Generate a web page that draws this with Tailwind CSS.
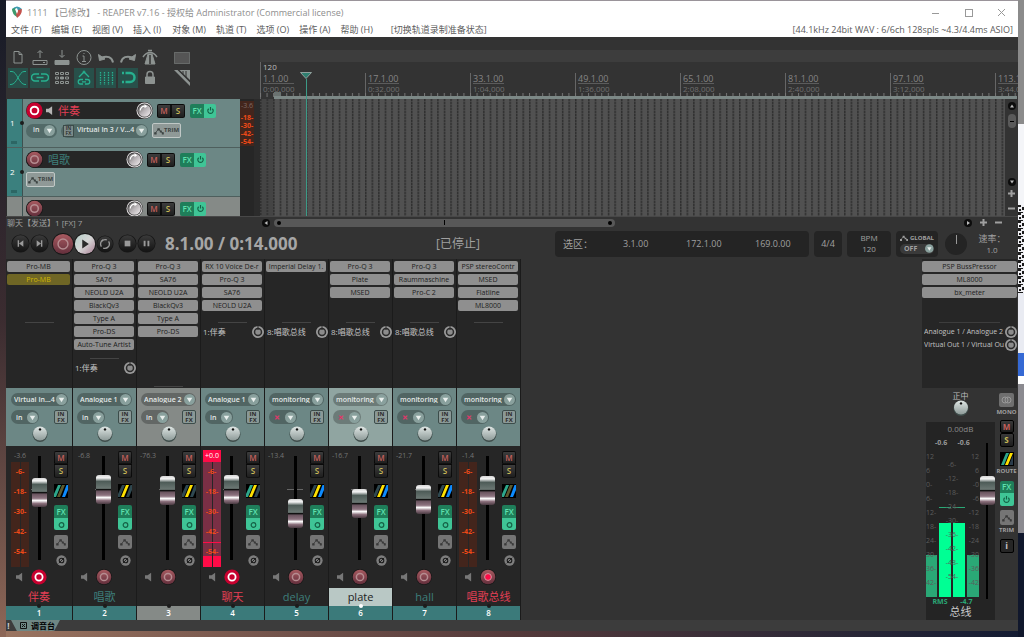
<!DOCTYPE html>
<html lang="zh-CN">
<head>
    <meta charset="UTF-8">
    <meta name="viewport" content="width=device-width, initial-scale=1.0">
    <title>1111 [已修改] - REAPER v7.16</title>
    <script src="https://cdn.jsdelivr.net/npm/@tailwindcss/browser@4"></script>
</head>
<body class="h-screen overflow-hidden flex bg-linear-to-b from-[#171b27] via-[#3b2c30] to-[#8d6757] font-['Open_Sans','Noto_Sans_CJK_SC',sans-serif] text-[#a0a0a0] select-none">

    <!-- Icon sprite -->
    <svg class="absolute w-0 h-0" aria-hidden="true" xmlns="http://www.w3.org/2000/svg">
        <defs>
            <linearGradient id="g-knob" x1="0" y1="0" x2="0" y2="1"><stop offset="0" stop-color="#dfe6e4"/><stop offset="1" stop-color="#8d9a98"/></linearGradient>
            <linearGradient id="g-vol" x1="0" y1="0" x2="1" y2="1"><stop offset="0" stop-color="#5a5a5a"/><stop offset="0.5" stop-color="#b9b4b7"/><stop offset="1" stop-color="#f4f0f2"/></linearGradient>
            <linearGradient id="g-rec" x1="0" y1="0" x2="0" y2="1"><stop offset="0" stop-color="#a85a60"/><stop offset="1" stop-color="#632f3c"/></linearGradient>
            <linearGradient id="g-play" x1="0" y1="0" x2="1" y2="1"><stop offset="0" stop-color="#b5cfc8"/><stop offset="0.5" stop-color="#d5d5d5"/><stop offset="1" stop-color="#a97f94"/></linearGradient>
            <linearGradient id="g-btn" x1="0" y1="0" x2="0" y2="1"><stop offset="0" stop-color="#3a3a3a"/><stop offset="1" stop-color="#141414"/></linearGradient>
            <pattern id="grid" width="6.5625" height="3" patternUnits="userSpaceOnUse"><rect x="0" width="1.5" height="2" fill="#303030"/><rect x="0" y="2" width="1.5" height="1" fill="#424242"/></pattern>
            <pattern id="ticks" width="6.5625" height="8" patternUnits="userSpaceOnUse"><rect width="1" height="8" fill="#767676"/></pattern>
            <pattern id="qr" width="6" height="8" patternUnits="userSpaceOnUse"><rect width="6" height="8" fill="#f0f0f4"/><path d="M0 0h3v2H0zM4 2h2v3H4zM1 4h2v2H1zM0 7h5v1H0z" fill="#1c1c1c"/></pattern>
        </defs>
        <symbol id="i-logo" viewBox="0 0 12 12"><path d="M1 3Q6-2 11 3L8 5 6 4Z" fill="#3c9bb0"/><path d="M1 3 4 2l3 5-1 4Q1 8 1 3Z" fill="#3d9a6c"/><path d="M11 3Q11 9 6 12L5 8l2-4Z" fill="#c3524c"/><path d="m4 3 2-1 1 3-1 3Z" fill="#fff"/></symbol>
        <symbol id="i-arrow" viewBox="0 0 12 12"><circle cx="6" cy="6" r="6" fill="#89a09d"/><path d="M3 4.200h6L6 9Z" fill="#e8eeec"/></symbol>
        <symbol id="i-speaker" viewBox="0 0 8 10"><path d="M0 3h3l4-3v10L3 7H0Z" fill="currentColor"/></symbol>
        <symbol id="i-rec" viewBox="0 0 16 16"><circle cx="8" cy="8" r="8" fill="#171717"/><circle cx="8" cy="8" r="7.300" fill="url(#g-rec)"/><circle cx="8" cy="8" r="3.600" fill="none" stroke="#b58c90" stroke-width="1.500"/></symbol>
        <symbol id="i-armed" viewBox="0 0 16 16"><circle cx="8" cy="8" r="7.600" fill="#c8002f"/><circle cx="8" cy="8" r="3.600" fill="none" stroke="#fff" stroke-width="1.800"/></symbol>
        <symbol id="i-auto" viewBox="0 0 16 16"><circle cx="8" cy="8" r="8" fill="#171717"/><circle cx="8" cy="8" r="7.300" fill="url(#g-rec)"/><circle cx="8" cy="8" r="3.400" fill="#ff0b47" stroke="#d39a9f"/></symbol>
        <symbol id="i-pan" viewBox="0 0 16 16"><circle cx="8" cy="8.500" r="7.500" fill="#3f4d4b"/><circle cx="8" cy="7.500" r="7" fill="url(#g-knob)"/><circle cx="8" cy="3.400" r="1.200" fill="#111"/></symbol>
        <symbol id="i-vol" viewBox="0 0 18 18"><circle cx="9" cy="9" r="8.500" fill="#e4e0e2"/><circle cx="9" cy="9" r="7.500" fill="#333"/><circle cx="9" cy="9" r="6.700" fill="url(#g-vol)"/><path d="M4.500 9a4.500 4.500 0 0 1 5-4.500" fill="none" stroke="#fff" stroke-width="1.300"/><path d="m9 2.500 3 2-3 2Z" fill="#fff"/></symbol>
        <symbol id="i-env" viewBox="0 0 12 10"><path d="M1 8 5.500 2.500 8 5.500l3 2" fill="none" stroke="currentColor" stroke-width="1"/><path d="M0 6.500h3v3H0zM4 1.500h3v3H4zM7 4.500h2.500V7H7zM9.500 6.500H12v3H9.500z" fill="currentColor"/></symbol>
        <symbol id="i-power" viewBox="0 0 10 10"><path d="M3 3a3 3 0 1 0 4 0M5 1v4" fill="none" stroke="currentColor" stroke-width="1.300"/></symbol>
        <symbol id="i-on" viewBox="0 0 10 10"><circle cx="5" cy="5.500" r="2.600" fill="none" stroke="currentColor" stroke-width="1.300"/></symbol>
        <symbol id="i-phase" viewBox="0 0 12 12"><circle cx="6" cy="6" r="5.600" fill="#7e7e7e"/><circle cx="6" cy="6" r="2.500" fill="none" stroke="#1c1c1c" stroke-width="1.200"/><path d="m3 9 6-6" stroke="#1c1c1c"/></symbol>
        <symbol id="i-send" viewBox="0 0 12 12"><circle cx="6" cy="6" r="6" fill="#9a9a9a"/><circle cx="6" cy="6" r="3.500" fill="#8c8c8c" stroke="#2b2b2b" stroke-width="1.500"/><path d="M6 0v4" stroke="#2b2b2b"/></symbol>
    </svg>

    <!-- Desktop edge, left -->
    <div class="w-[6px] shrink-0"></div>

    <div class="flex-1 min-w-0 flex flex-col pt-px bg-[#9a949a]">

        <!-- Title bar -->
        <header class="h-[22px] shrink-0 bg-white flex items-center pl-[5px] text-[9px] leading-none text-[#8e8e8e]">
            <svg class="w-3 h-3 mr-1"><use href="#i-logo"/></svg>
            <h1>1111 【已修改】 - REAPER v7.16 - 授权给 Administrator (Commercial license)</h1>
            <div class="ml-auto flex items-center pr-3 gap-6">
                <button aria-label="Minimize"><svg class="w-[9px] h-[9px]" viewBox="0 0 9 9"><path d="M1 5.500h7" stroke="#999"/></svg></button>
                <button aria-label="Maximize"><svg class="w-[9px] h-[9px]" viewBox="0 0 9 9"><rect x="1.500" y="1.500" width="7" height="7" fill="none" stroke="#999"/></svg></button>
                <button aria-label="Close"><svg class="w-[9px] h-[9px]" viewBox="0 0 9 9"><path d="m1 1 7 7M8 1 1 8" stroke="#999"/></svg></button>
            </div>
        </header>

        <!-- Menu -->
        <nav class="h-[14px] shrink-0 bg-white flex items-center pl-[5px] pr-[5px] gap-[10px] text-[9px] leading-[14px] text-[#5c5c5c] whitespace-nowrap">
            <a href="#">文件 (F)</a>
            <a href="#">编辑 (E)</a>
            <a href="#">视图 (V)</a>
            <a href="#">插入 (I)</a>
            <a href="#" class="ml-px">对象 (M)</a>
            <a href="#">轨道 (T)</a>
            <a href="#">选项 (O)</a>
            <a href="#">操作 (A)</a>
            <a href="#">帮助 (H)</a>
            <a href="#" class="ml-2">[切换轨道录制准备状态]</a>
            <span class="ml-auto">[44.1kHz 24bit WAV : 6/6ch 128spls ~4.3/4.4ms ASIO]</span>
        </nav>

        <!-- Track panel and arrange view -->
        <section class="h-[179px] shrink-0 flex bg-[#333]">
            <div class="w-[254px] shrink-0 flex flex-col">
                <div class="h-[62px] shrink-0 pt-[10px] pl-px flex gap-[10px]">
                    <div class="grid grid-cols-7 content-start" id="toolbar"></div>
                    <div class="flex flex-col">
                        <button aria-label="Marquee" class="w-[22px] h-[21px] grid place-items-center"><svg class="w-4 h-3" viewBox="0 0 16 12"><rect x=".5" y=".5" width="15" height="11" fill="#555" stroke="#8d9391" stroke-dasharray="1 1"/></svg></button>
                        <button aria-label="Hide grid" class="w-[22px] h-[20px] grid place-items-center"><svg class="w-4 h-4" viewBox="0 0 16 16"><path d="M0 0 16 16v-3.500L3.500 0ZM5.500 0H16v10Z" fill="#8d9391"/><path d="M9 1v3M12 1v6" stroke="#333"/></svg></button>
                    </div>
                </div>
                <div class="flex-1 flex min-h-0 pr-[6px] bg-[#2b2b2b]">
                    <div id="tracks" class="flex-1 min-h-0 overflow-hidden ml-px"></div>
                    <div class="w-[14px] bg-[#262626] pt-[2px]">
                        <div class="bg-[#43251c] text-[7px] leading-[8px] font-bold text-[#ef4a18] text-center flex flex-col">
                            <span class="h-[13px] text-[#7d6a64] leading-[10px] font-normal">-3.6</span>
                            <span>-18-</span><span>-30-</span><span>-42-</span><span>-54-</span>
                        </div>
                    </div>
                </div>
            </div>

            <div class="flex-1 min-w-0 flex flex-col relative overflow-hidden">
                <div class="h-[13px] shrink-0"></div>
                <div class="h-[12px] shrink-0 bg-[#3d3d3d]"></div>
                <div class="h-[11px] shrink-0 border-l border-[#666] pl-0.5 text-[8px] leading-[10px] text-[#bbb]">120</div>
                <div id="ruler" class="h-[26px] shrink-0 flex relative overflow-hidden"></div>
                <div class="flex-1 flex min-h-0">
                    <div class="flex-1 bg-[#515151]">
                        <svg class="w-full h-full block"><rect width="14" height="100%" fill="#444"/><rect width="100%" height="100%" fill="url(#grid)"/></svg>
                    </div>
                    <div class="w-[13px] flex flex-col items-center text-[#a0a0a0]">
                        <button aria-label="Scroll up" class="mt-[3px]"><svg class="w-2 h-2 block" viewBox="0 0 8 8"><circle cx="4" cy="4" r="4" fill="#0c0c0c"/><path d="M2 5.500h4l-2-3Z" fill="#bbb"/></svg></button>
                        <div class="mt-1 w-2 h-[14px] rounded-full bg-[#5a5a5a] grid place-items-center"><span class="w-1 h-px bg-black"></span></div>
                        <button aria-label="Scroll down" class="mt-auto"><svg class="w-2 h-2 block" viewBox="0 0 8 8"><circle cx="4" cy="4" r="4" fill="#0c0c0c"/><path d="M2 2.500h4l-2 3Z" fill="#bbb"/></svg></button>
                        <button aria-label="Zoom in" class="mt-1"><svg class="w-[7px] h-[7px] block" viewBox="0 0 7 7"><path d="M0 3.500h7M3.500 0v7" stroke="#a0a0a0" stroke-width="2"/></svg></button>
                        <button aria-label="Zoom out" class="mt-2 mb-1"><svg class="w-[7px] h-[7px] block" viewBox="0 0 7 7"><path d="M0 3.500h7" stroke="#a0a0a0" stroke-width="2"/></svg></button>
                    </div>
                </div>
                <!-- Edit cursor -->
                <div class="absolute left-[40px] top-[35px] bottom-0 w-[12px] flex flex-col items-center">
                    <svg class="w-3 h-[7px] shrink-0" viewBox="0 0 12 7"><path d="M.5.5h11L6 6.500Z" fill="#2f7f70" stroke="#8fa09c"/></svg>
                    <div class="w-px flex-1 bg-[#3c9a87]"></div>
                </div>
            </div>
        </section>

        <!-- Status and horizontal scroll -->
        <div class="h-[12px] shrink-0 bg-[#333] flex items-center border-t border-[#484848]">
            <span class="w-[256px] pl-px text-[8px] leading-none">聊天【发送】1 [FX] 7</span>
            <svg class="w-2 h-2" viewBox="0 0 8 8"><circle cx="4" cy="4" r="4" fill="#0c0c0c"/><path d="M5.500 2v4l-3-2Z" fill="#bbb"/></svg>
            <div class="ml-1 w-[341px] h-2 rounded-full bg-[#585858] flex items-center justify-between px-[3px]">
                <span class="w-1 h-1 rounded-full bg-black"></span><span class="w-px h-[5px] bg-black"></span><span class="w-1 h-1 rounded-full bg-black"></span>
            </div>
            <div class="ml-auto flex items-center gap-2 pr-[16px]">
                <svg class="w-2 h-2" viewBox="0 0 8 8"><circle cx="4" cy="4" r="4" fill="#0c0c0c"/><path d="M3 2v4l3-2Z" fill="#bbb"/></svg>
                <svg class="w-[7px] h-[7px]" viewBox="0 0 7 7"><path d="M0 3.500h7M3.500 0v7" stroke="#a0a0a0" stroke-width="2"/></svg>
                <svg class="w-[7px] h-[7px]" viewBox="0 0 7 7"><path d="M0 3.500h7" stroke="#a0a0a0" stroke-width="2"/></svg>
            </div>
        </div>

        <!-- Transport -->
        <section class="h-[31px] shrink-0 bg-[#333] flex items-center text-[9px] leading-none">
            <div class="flex items-center pl-[5px]" id="transport"></div>
            <div class="pl-[9px] w-[280px] text-[17px] font-bold text-[#a6a6a6] whitespace-nowrap">8.1.00 / 0:14.000</div>
            <div class="text-[12px]">[已停止]</div>
            <div class="ml-auto flex items-center gap-[5px] pr-[6px]">
                <div class="w-[254px] h-[26px] rounded bg-[#242424] flex items-center pl-2">
                    <span class="w-[60px] text-[10px]">选区：</span><span class="w-[63px]">3.1.00</span><span class="w-[69px]">172.1.00</span><span>169.0.00</span>
                </div>
                <div class="w-[28px] h-[26px] rounded bg-[#242424] grid place-items-center">4/4</div>
                <div class="w-[44px] h-[26px] rounded bg-[#242424] flex flex-col items-center justify-center gap-[3px] text-[8px]"><span>BPM</span><span>120</span></div>
                <div class="w-[42px] h-[26px] rounded bg-[#242424] flex flex-col justify-center gap-[2px] px-1 text-[6px] font-bold">
                    <span class="flex items-center gap-0.5"><svg class="w-[10px] h-2"><use href="#i-env"/></svg>GLOBAL</span>
                    <label class="flex items-center rounded-full bg-[#3a3a3a] pl-1 h-[10px]"><select aria-label="Global automation" class="appearance-none w-[22px] bg-transparent outline-none text-[7px]"><option>OFF</option></select><svg class="w-[9px] h-[9px]"><use href="#i-arrow"/></svg></label>
                </div>
                <div class="ml-[2px] w-[22px] h-[22px] rounded-full bg-[#242424] flex justify-center pt-[2px]"><span class="w-px h-[9px] bg-[#999]"></span></div>
                <div class="w-[40px] flex flex-col items-center gap-[3px]"><span class="text-[9px]">速率：</span><span class="text-[8px]">1.0</span></div>
            </div>
        </section>

        <!-- Mixer -->
        <section class="flex-1 min-h-0 bg-[#333] flex">
            <div id="mixer" class="flex"></div>

            <!-- Master strip -->
            <div class="ml-auto w-[96px] flex flex-col">
                <div class="flex-1 min-h-0 bg-[#262626] mr-px overflow-hidden">
                    <div id="master-fx" class="min-h-[55px] pt-[2px]"></div>
                    <div class="mt-2 mx-auto w-[61px] h-px bg-[#3d3d3d]"></div>
                    <div class="mt-[2px] pl-[2px] text-[7px] leading-[13px] text-[#c4c4c4] whitespace-nowrap">
                        <div class="flex items-center"><span class="w-[81px] overflow-hidden">Analogue 1 / Analogue 2</span><svg class="w-3 h-3 shrink-0"><use href="#i-send"/></svg></div>
                        <div class="flex items-center"><span class="w-[81px] overflow-hidden">Virtual Out 1 / Virtual Ou</span><svg class="w-3 h-3 shrink-0"><use href="#i-send"/></svg></div>
                    </div>
                </div>
                <div class="h-[232px] shrink-0 flex">
                    <div class="w-[73px] pl-[4px] flex flex-col">
                        <div class="h-[34px] shrink-0 flex flex-col items-center pt-[3px]">
                            <span class="text-[8px] leading-[9px] h-[9px] text-[#bbb]">正中</span>
                            <svg class="w-4 h-4"><use href="#i-pan"/></svg>
                        </div>
                        <div class="flex-1 bg-[#242424] flex flex-col">
                            <div class="h-[14px] text-center text-[8px] leading-[14px] text-[#8a8a8a]">0.00dB</div>
                            <div class="flex">
                                <div class="w-[53px]">
                                    <div class="h-[14px] flex justify-around px-1 text-[7px] leading-[14px] font-bold text-[#9a9a9a]"><span>-0.6</span><span>-0.6</span></div>
                                    <div class="h-[147px] flex gap-[2px] text-[7px] leading-[14px] text-[#5c5c5c]">
                                        <div class="relative w-[11px]"><div class="absolute inset-x-0 bottom-0 h-[42px] bg-[#2aa876]"></div><div id="scale-l" class="relative flex flex-col"></div></div>
                                        <div class="relative w-[26px]">
                                            <div class="absolute inset-x-0 bottom-0 h-[74px] flex gap-[2px]"><span class="flex-1 bg-[#00ff94]"></span><span class="flex-1 bg-[#00ff94]"></span></div>
                                            <div class="absolute inset-x-0 top-[57px] h-px flex gap-[2px]"><span class="flex-1 bg-[#2aa876]"></span><span class="flex-1 bg-[#2aa876]"></span></div>
                                            <div id="scale-m" class="relative flex flex-col items-center pt-2"></div>
                                        </div>
                                        <div class="relative w-[12px]"><div class="absolute inset-x-0 bottom-0 h-[42px] bg-[#2aa876]"></div><div id="scale-r" class="relative flex flex-col items-end"></div></div>
                                    </div>
                                    <div class="h-[9px] flex justify-around text-[7px] leading-[9px] font-bold text-[#2aa876]"><span>RMS</span><span>-4.7</span></div>
                                </div>
                                <input type="range" aria-label="Master volume" min="0" max="127" value="94" class="mt-[7px] -mr-1 w-[16px] h-[156px] appearance-none [writing-mode:vertical-lr] [direction:rtl] [background:linear-gradient(#000,#000)_center/2px_100%_no-repeat] [&::-webkit-slider-thumb]:appearance-none [&::-webkit-slider-thumb]:w-[15px] [&::-webkit-slider-thumb]:h-[29px] [&::-webkit-slider-thumb]:rounded-[3px] [&::-webkit-slider-thumb]:bg-[linear-gradient(#d8d8d8_0,#f4f4f4_10%,#4e5c58_22%,#6b7773_46%,#111_50%,#6b5560_56%,#8d7480_70%,#fff_78%,#8a6f7b_88%,#4a3a42_100%)]">
                            </div>
                            <div class="h-[14px] text-[11px] leading-[12px] text-center text-[#c8c8c8]">总线</div>
                        </div>
                    </div>
                    <div class="w-[23px] flex flex-col items-center pt-[5px] text-[6px] leading-[10px] font-bold text-[#a0a0a0]">
                        <button aria-label="Mono" class="w-[15px] h-[14px] rounded-xs bg-[#6f6f6f] grid place-items-center"><svg class="w-[11px] h-[8px]" viewBox="0 0 11 8"><circle cx="4" cy="4" r="3" fill="none" stroke="#999"/><circle cx="7" cy="4" r="3" fill="none" stroke="#999"/></svg></button>
                        <span class="h-[13px]">MONO</span>
                        <button class="w-[14px] h-[13px] rounded-xs border border-black bg-linear-to-b from-[#3a3a3a] to-[#1d1d1d] text-[8px] text-[#c4605c]">M</button>
                        <button class="w-[14px] h-[14px] rounded-xs border border-black bg-linear-to-b from-[#3a3a3a] to-[#1d1d1d] text-[8px] text-[#c8ba56]">S</button>
                        <button aria-label="Route" class="mt-[5px] w-[14px] h-[14px] bg-black"><svg class="w-full h-full" viewBox="0 0 14 14"><path d="M1 13 6 1h3L4 13Z" fill="#2ea78b"/><path d="M5 13 10 1h3L8 13Z" fill="#ffe100"/><path d="M9 13 13 3v10Z" fill="#2b3c4b"/></svg></button>
                        <span class="h-[15px]">ROUTE</span>
                        <button class="w-[14px] h-[12px] rounded-t-xs bg-[#1f7e5a] text-[8px] font-semibold text-[#5fe0ae]">FX</button>
                        <button aria-label="FX bypass" class="w-[14px] h-[13px] rounded-b-xs bg-[#3fc596] text-[#156246] grid place-items-center"><svg class="w-[9px] h-[9px]"><use href="#i-power"/></svg></button>
                        <button aria-label="Envelope" class="mt-1 w-[14px] h-[15px] rounded-xs bg-[#757575] text-[#3a3a3a] grid place-items-center"><svg class="w-[10px] h-2"><use href="#i-env"/></svg></button>
                        <span class="h-[14px]">TRIM</span>
                        <button class="w-[14px] h-[14px] rounded-xs border border-black bg-[#262626] text-[9px] text-[#c0c0c0]">i</button>
                    </div>
                </div>
            </div>
        </section>

        <!-- Docker tab -->
        <footer class="h-[11px] shrink-0 bg-[#3c3c3c] flex items-center text-[8px] leading-none text-[#ccc] font-bold">
            <span class="w-[5px] text-center">!</span>
            <button class="h-full w-[49px] bg-[#6f8784] text-black flex items-center gap-1 pl-[9px] [clip-path:polygon(0_0,100%_0,88%_100%,12%_100%)]">
                <svg class="w-[7px] h-[7px] shrink-0" viewBox="0 0 7 7"><path d="M.5.5h6v6h-6zM2 2l3 3M5 2 2 5" fill="none" stroke="#111"/></svg>
                <span class="whitespace-nowrap">调音台</span>
            </button>
        </footer>
        <!-- Desktop edge, bottom -->
        <div class="h-[6px] shrink-0 bg-linear-to-r from-[#9a7460] via-[#54393a] to-[#141c33]"></div>
    </div>

    <!-- Desktop edge, right -->
    <div class="w-[6px] shrink-0 flex flex-col">
        <div class="h-[124px] bg-[#8b8b8b]"></div>
        <div class="h-[81px] bg-[#f4f5f8]"></div>
        <svg class="h-[88px] w-full block"><rect width="6" height="88" fill="url(#qr)"/></svg>
        <div class="h-[60px] bg-[#e9ebf2]"></div>
        <div class="h-[23px] bg-[#3569d4]"></div>
        <div class="h-[8px] bg-white"></div>
        <div class="h-[149px] bg-[#8b8a90]"></div>
        <div class="flex-1 bg-[#10172c]"></div>
    </div>

    <script>
        const use = (id, cls) => `<svg class="${cls}"><use href="#${id}"/></svg>`;

        // Toolbar
        const tools = [
            ['New', '<path d="M5 2.500h5l3 3V14H5zM10 2.500v3h3"/>'],
            ['Open', '<path d="M2 11.500h14v4H2zM12 13.500h2M9 9V2M6.500 4 9 1.500 11.500 4"/>'],
            ['Save', '<path d="M2 11.500h14v4H2z" fill="#8d9391"/><path d="M9 1v7M6.500 6 9 8.500 11.500 6"/>'],
            ['Info', '<circle cx="9" cy="8.500" r="7"/><path d="M7.500 7H9v5.500M7 12.500h4M8.500 4.500h1"/>'],
            ['Undo', '<path d="M16 13.500C15 8 10 6.500 5 8.500" stroke-width="2"/><path d="m1.500 5.500 1 6 5.500-1.500Z" fill="#8d9391"/>'],
            ['Redo', '<path d="M2 13.500C3 8 8 6.500 13 8.500" stroke-width="2"/><path d="m16.500 5.500-1 6-5.500-1.500Z" fill="#8d9391"/>'],
            ['Metronome', '<path d="M7 5h4l3 10H4Z" fill="#8d9391"/><path d="M9 6v9" stroke="#333" stroke-width="1.500"/><path d="M2 8q3-4.500 7-4.500T16 8M7 1.500h4" stroke-width="1.500"/>'],
            ['Crossfade', '<path d="M1 2.500h2c5 0 7 13 13 13h1M17 2.500h-2c-5 0-7 13-13 13H1"/>', 1],
            ['Group', '<path d="M8 5H4a3.500 3.500 0 0 0 0 7h4M10 5h4a3.500 3.500 0 0 1 0 7h-4M5.500 8.500h7" stroke-width="1.500"/>', 1],
            ['Ripple', '<path d="M2.500 3.500h3v2h-3zM7.500 3.500h3v2h-3zM12.500 3.500h3v2h-3zM2.500 8h3v2h-3zM12.500 8h3v2h-3zM2.500 12.500h3v2h-3zM7.500 12.500h3v2h-3zM12.500 12.500h3v2h-3z"/><path d="M7.500 8h3v2h-3z" fill="#8d9391"/>'],
            ['Envelope', '<path d="M4 8l5-5 5 5M8 10.500H5.500a2 2 0 0 0 0 4.500H8M10 10.500h2.500a2 2 0 0 1 0 4.500H10M7 12.800h4" stroke-width="1.300"/><circle cx="9" cy="3" r="1"/>', 1],
            ['Grid', '<path d="M3.500 3v13M7.500 3v13M11.500 3v13M15.500 3v13" stroke-width="1.300" stroke-dasharray="1.500 1"/>', 1],
            ['Snap', '<path d="M6.500 4H11a4.500 4.500 0 0 1 0 9H6.500" stroke-width="2.500"/><path d="M3 4h2M3 13h2" stroke-width="2.500"/>', 1],
            ['Lock', '<path d="M4.500 8h9v6.500h-9z" fill="#8d9391"/><path d="M6 8V5.500a3 3 0 0 1 6 0V8" stroke-width="1.500"/>'],
        ];
        document.getElementById('toolbar').innerHTML = tools.map(([name, d, on], i) => `
            <button aria-label="${name}" class="w-[22px] ${i < 7 ? 'h-[21px]' : 'h-[20px]'} px-px">
                <span class="grid place-items-center w-full h-full ${on ? 'bg-[#28504a]' : ''}">
                    <svg class="w-[18px] h-[18px]" viewBox="0 0 18 18" fill="none" stroke="${on ? '#27b08f' : '#8d9391'}">${d}</svg>
                </span>
            </button>`).join('');

        // Ruler
        const marks = [['1.1.00', '0:00.000'], ['17.1.00', '0:32.000'], ['33.1.00', '1:04.000'], ['49.1.00', '1:36.000'], ['65.1.00', '2:08.000'], ['81.1.00', '2:40.000'], ['97.1.00', '3:12.000'], ['113.1.00', '3:44.000']];
        document.getElementById('ruler').innerHTML = marks.map(([bar, time]) => `
            <div class="w-[105px] shrink-0 border-l border-[#666] pl-[2px] pt-px">
                <div class="w-[31px] border-b border-[#5c5c5c] text-[9px] leading-[9px] text-[#858585] whitespace-nowrap">${bar}</div>
                <div class="text-[8px] leading-[10px] text-[#707070]">${time}</div>
            </div>`).join('') + `
            <svg class="absolute inset-x-0 bottom-[2px] w-full h-1"><rect width="100%" height="4" fill="url(#ticks)"/></svg>
            <div class="absolute left-[14px] right-px bottom-0 h-[3px] bg-[#7c8886]"></div>
            <div class="absolute left-[14px] bottom-[3px] w-[7px] h-1 bg-[#6a7270]"></div>`;

        // Shared buttons
        const ms = 'border border-black/70 bg-linear-to-b from-[#3d3d3d] to-[#1f1f1f] text-[8px] leading-none font-semibold';

        // Track control panel
        const trim = `<button class="w-[29px] h-[15px] rounded-xs border border-[#c0c8c6] bg-[#8f9997] text-[#3c4443] text-[6px] font-bold flex items-center justify-center">${use('i-env', 'w-[10px] h-2')}TRIM</button>`;
        const tracks = [
            {n: 1, name: '伴奏', color: 'text-[#e23f55]', rec: 'i-armed', pill: 'w-[127px]', side: 'bg-[#3b807e]', body: 'bg-[#6c8785]', input: true},
            {n: 2, name: '唱歌', color: 'text-[#3e7f7b]', rec: 'i-rec', pill: 'w-[117px]', side: 'bg-[#3b807e]', body: 'bg-[#6c8785]', extra: trim},
            {n: '', name: '', color: '', rec: 'i-rec', pill: 'w-[117px]', side: 'bg-[#858a87]', body: 'bg-[#858a87]'},
        ];
        document.getElementById('tracks').innerHTML = tracks.map(t => `
            <div class="h-[49px] flex border-b border-[#4e5f5d]">
                <div class="w-[15px] ${t.side} flex items-center text-[8px] text-white pl-[3px] relative">${t.n}<span class="absolute -right-[2px] w-1 h-1 rounded-full bg-[#1c1c1c]"></span><span class="absolute left-1 bottom-[3px] w-[6px] h-[3px] bg-[#2c6664]"></span></div>
                <div class="flex-1 ${t.body} border-l border-[#3d5150] pl-[3px] pt-[3px]">
                    <div class="flex items-center">
                        <div class="${t.pill} h-[17px] rounded-full bg-[#262626] flex items-center text-[11px] leading-none ${t.color}">
                            <button aria-label="Record arm">${use(t.rec, 'w-[17px] h-[17px] block')}</button>
                            ${t.input ? use('i-speaker', 'w-[7px] h-[9px] ml-[3px] text-[#b5b5b5]') : ''}
                            <span class="ml-[5px]">${t.name}</span>
                            ${use('i-vol', 'w-[17px] h-[17px] ml-auto')}
                        </div>
                        <button class="ml-1 w-[14px] h-[14px] rounded-l-xs ${ms} text-[#c4605c]">M</button>
                        <button class="w-[14px] h-[14px] rounded-r-xs ${ms} text-[#c8ba56]">S</button>
                        <button class="ml-[5px] w-[14px] h-[14px] rounded-l-xs bg-[#1f7e5a] text-[8px] leading-none font-semibold text-[#5fe0ae]">FX</button>
                        <button aria-label="FX bypass" class="w-[12px] h-[14px] rounded-r-xs bg-[#3fc596] text-[#156246] grid place-items-center">${use('i-power', 'w-[9px] h-[9px]')}</button>
                    </div>
                    ${t.input ? `
                    <div class="mt-[4px] flex items-center text-[7px] font-semibold text-[#e0e6e5] gap-1">
                        <label class="w-[31px] h-[14px] rounded-full bg-[#526a68] flex items-center pl-[7px]"><select aria-label="Monitor" class="appearance-none w-[11px] bg-transparent outline-none"><option>in</option></select>${use('i-arrow', 'w-[11px] h-[11px]')}</label>
                        <label class="w-[87px] h-[14px] rounded-full bg-[#526a68] flex items-center pl-[2px]"><span class="w-[11px] h-[12px] bg-[#7c8b89] border border-[#3c4c4a] text-[5px] leading-[5px] text-[#222] text-center">IN<br>FX</span><select aria-label="Input" class="appearance-none ml-[3px] w-[59px] bg-transparent outline-none"><option>Virtual In 3 / V...4</option></select>${use('i-arrow', 'w-[11px] h-[11px]')}</label>
                        ${trim}
                    </div>` : `<div class="mt-[4px]">${t.extra || ''}</div>`}
                </div>
            </div>`).join('');

        // Transport
        const round = d => `<circle cx="10" cy="10" r="9.500" fill="#161616"/><circle cx="10" cy="10" r="8.700" fill="url(#g-btn)"/>${d}`;
        const transport = [
            ['Start', 'w-[19px] h-[19px]', round('<path d="M7 6.500h1.500v7H7zM13 6.500v7L8.500 10Z" fill="#9a9a9a"/>')],
            ['End', 'w-[19px] h-[19px]', round('<path d="M11.500 6.500H13v7h-1.500zM7 6.500v7l4.500-3.500Z" fill="#9a9a9a"/>')],
            ['Record', 'w-[22px] h-[22px] ml-[3px]', '<circle cx="10" cy="10" r="10" fill="#171717"/><circle cx="10" cy="10" r="9.200" fill="url(#g-rec)"/><circle cx="10" cy="10" r="4.500" fill="none" stroke="#b58c90" stroke-width="1.300"/>'],
            ['Play', 'w-[22px] h-[22px]', '<circle cx="10" cy="10" r="10" fill="#171717"/><circle cx="10" cy="10" r="9.200" fill="url(#g-play)"/><path d="M7.500 6v8l6-4Z" fill="#2a2a2a"/>'],
            ['Repeat', 'w-[18px] h-[18px]', round('<path d="M6 13a5 5 0 0 1 2-7.500M14 7a5 5 0 0 1-2 7.500M6.500 7A5 5 0 0 1 12 5.500M13.500 13A5 5 0 0 1 8 14.500" fill="none" stroke="#9a9a9a" stroke-width="1.500"/>')],
            ['Stop', 'w-[19px] h-[19px] ml-[4px]', round('<path d="M7 7h6v6H7z" fill="#9a9a9a"/>')],
            ['Pause', 'w-[19px] h-[19px]', round('<path d="M7 7h2v6H7zM11 7h2v6h-2z" fill="#9a9a9a"/>')],
        ];
        document.getElementById('transport').innerHTML = transport.map(([name, cls, d]) =>
            `<button aria-label="${name}"><svg class="${cls} block" viewBox="0 0 20 20">${d}</svg></button>`).join('');

        // Mixer strips
        const slot = (name, off) => `<button class="block w-full h-[11px] mb-[2px] rounded-xs px-px text-[7px] leading-[11px] overflow-hidden whitespace-nowrap ${off ? 'bg-[#6f6625] text-[#d0b800]' : 'bg-[#8f8f8f] text-[#1c1c1c]'}">${name}</button>`;
        const teal = 'bg-[#6c8785]', red = 'text-[#e23f55]', dim = 'text-[#3e7f7b]';
        const strips = [
            {fx: ['Pro-MB', 'Pro-MB'], out: 'Virtual In...4', in: 'in', panel: teal, db: '-3.6', meter: 'normal', fader: 53, route: 'gdb', rec: 'i-armed', name: '伴奏', color: red},
            {fx: ['Pro-Q 3', 'SA76', 'NEOLD U2A', 'BlackQv3', 'Type A', 'Pro-DS', 'Auto-Tune Artist'], send: '1:伴奏', out: 'Analogue 1', in: 'in', panel: teal, db: '-6.8', fader: 56, route: 'nyn', rec: 'i-rec', name: '唱歌', color: dim},
            {fx: ['Pro-Q 3', 'SA76', 'NEOLD U2A', 'BlackQv3', 'Type A', 'Pro-DS'], out: 'Analogue 2', in: 'in', panel: 'bg-[#858a87]', db: '-76.3', fader: 55, route: 'nyn', rec: 'i-rec', name: '', color: dim},
            {fx: ['RX 10 Voice De-r', 'Pro-Q 3', 'SA76', 'NEOLD U2A'], send: '1:伴奏', out: 'Analogue 1', in: 'in', panel: teal, db: '+0.0', meter: 'clip', fader: 56, route: 'gyn', rec: 'i-armed', name: '聊天', color: red},
            {fx: ['Imperial Delay 1.'], send: '8:唱歌总线', out: 'monitoring', in: '✕', panel: teal, db: '-13.4', fader: 32, route: 'nyb', rec: 'i-rec', name: 'delay', color: dim},
            {fx: ['Pro-Q 3', 'Plate', 'MSED'], send: '8:唱歌总线', out: 'monitoring', in: '✕', panel: 'bg-[#90a5a1]', db: '-16.7', fader: 42, route: 'nyb', rec: 'i-rec', name: 'plate', color: 'bg-[#b9c8c5] text-[#222]'},
            {fx: ['Pro-Q 3', 'Raummaschine', 'Pro-C 2'], send: '8:唱歌总线', out: 'monitoring', in: '✕', panel: teal, db: '-21.7', fader: 46, route: 'nyb', rec: 'i-rec', name: 'hall', color: dim},
            {fx: ['PSP stereoContr', 'MSED', 'Flatline', 'ML8000'], out: 'monitoring', in: '✕', panel: teal, db: '-1.4', meter: 'normal', fader: 55, route: 'gdb', rec: 'i-auto', name: '唱歌总线', color: red},
        ];
        const routeColors = {g: '#2ea78b', d: '#5c5a2e', b: '#0d8bff', n: '#2f4850', y: '#ffe100'};
        const scale = '<span>-6-</span><span>-18-</span><span>-30-</span><span>-42-</span><span>-54-</span>';

        document.getElementById('mixer').innerHTML = strips.map((s, i) => `
            <div class="${i ? 'w-[64px]' : 'w-[67px]'} flex flex-col bg-[#262626] border-r border-[#1b1b1b]">
                <div class="flex-1 min-h-0 overflow-hidden">
                    <div class="${i === 2 ? 'min-h-[119px]' : 'min-h-[55px]'} pt-[2px] pl-px pr-[2px]">${s.fx.map((f, k) => slot(f, !i && k)).join('')}</div>
                    <div class="mt-2 mx-auto w-[29px] h-px bg-[#444]"></div>
                    ${s.send ? `<div class="mt-[2px] flex items-center text-[8px] leading-[13px] text-[#c4c4c4] whitespace-nowrap pl-[2px]"><span class="flex-1">${s.send}</span>${use('i-send', 'w-3 h-3 shrink-0')}</div>` : ''}
                </div>
                <div class="h-[58px] shrink-0 ${s.panel} flex flex-col px-[4px] pt-[5px] text-[7px] leading-none font-semibold text-[#e3e9e8] ${i ? '' : 'pl-[5px]'}">
                    <label class="h-[13px] rounded-full bg-black/25 flex items-center pl-[3px] pr-px"><select aria-label="Input ${i + 1}" class="appearance-none flex-1 min-w-0 bg-transparent outline-none"><option>${s.out}</option></select>${use('i-arrow', 'w-[11px] h-[11px] shrink-0')}</label>
                    <div class="mt-[4px] flex justify-between">
                        <label class="h-[14px] w-[28px] rounded-full bg-black/25 flex items-center pl-[5px] ${s.in === 'in' ? '' : 'text-[#e2376a]'}"><select aria-label="Monitor ${i + 1}" class="appearance-none w-[11px] bg-transparent outline-none"><option>${s.in}</option></select>${use('i-arrow', 'w-[11px] h-[11px] shrink-0')}</label>
                        <button class="w-[14px] h-[14px] rounded-xs border border-[#3c4c4a] bg-[#8a9896] text-[#2a2a2a] text-[6px] leading-[6px] font-bold">IN<br>FX</button>
                    </div>
                    <div class="mt-[2px] flex justify-center">${use('i-pan', 'w-4 h-4')}</div>
                </div>
                <div class="h-[122px] shrink-0 flex ${i ? 'pl-[2px]' : 'pl-[5px]'}">
                    <div class="w-[18px] pt-[4px] pb-px flex flex-col text-[7px]">
                        <div class="h-[12px] leading-[12px] text-center whitespace-nowrap ${s.meter === 'clip' ? 'bg-[#ff0b47] text-white' : 'text-[#747474]'}">${s.db}</div>
                        ${s.meter ? `
                        <div class="flex-1 relative flex flex-col text-center font-bold leading-[20px] text-[#ef4a18] ${s.meter === 'clip' ? 'bg-[#7a2f45]' : 'bg-[#43251c]'}">
                            <span class="absolute inset-y-0 left-1/2 w-px bg-[#262626]"></span>
                            ${s.meter === 'clip' ? '<span class="absolute inset-x-0 bottom-[24px] h-px bg-[#ff0b47]"></span><span class="absolute inset-x-0 bottom-0 h-[11px] flex gap-px"><i class="flex-1 bg-[#ff0b47]"></i><i class="flex-1 bg-[#ff0b47]"></i></span>' : ''}
                            <div class="relative flex flex-col">${scale}</div>
                        </div>` : ''}
                    </div>
                    <input type="range" aria-label="Volume ${i + 1}" min="0" max="75" value="${s.fader}" class="mt-[10px] ml-[2px] w-[16px] h-[104px] appearance-none [writing-mode:vertical-lr] [direction:rtl] [background:linear-gradient(#000,#000)_center/3px_100%_no-repeat,linear-gradient(#666,#666)_0_33px/16px_1px_no-repeat] [&::-webkit-slider-thumb]:appearance-none [&::-webkit-slider-thumb]:w-[15px] [&::-webkit-slider-thumb]:h-[29px] [&::-webkit-slider-thumb]:rounded-[3px] [&::-webkit-slider-thumb]:bg-[linear-gradient(#d8d8d8_0,#f4f4f4_10%,#4e5c58_22%,#6b7773_46%,#111_50%,#6b5560_56%,#8d7480_70%,#fff_78%,#8a6f7b_88%,#4a3a42_100%)]">
                    <div class="ml-[7px] w-[14px] pt-[5px] flex flex-col items-center">
                        <button class="w-full h-[13px] rounded-t-xs ${ms} text-[#c4605c]">M</button>
                        <button class="w-full h-[14px] rounded-b-xs ${ms} text-[#c8ba56]">S</button>
                        <button aria-label="Route" class="mt-[6px] w-full h-[14px] bg-black"><svg class="w-full h-full" viewBox="0 0 14 14"><path d="M0 13V10L4 1h3L2 13Z" fill="${routeColors[s.route[0]]}"/><path d="M3 13 8 1h3L6 13Z" fill="${routeColors[s.route[1]]}"/><path d="M8 13 12.500 1H14v5l-3 7Z" fill="${routeColors[s.route[2]]}"/></svg></button>
                        <button class="mt-[7px] w-full h-[13px] rounded-t-xs bg-[#1f7e5a] text-[8px] leading-none font-semibold text-[#5fe0ae]">FX</button>
                        <button aria-label="FX bypass" class="w-full h-[12px] rounded-b-xs bg-[#3fc596] text-[#156246] grid place-items-center">${use('i-on', 'w-[9px] h-[9px]')}</button>
                        <button aria-label="Envelope" class="mt-[5px] w-full h-[14px] rounded-xs bg-[#757575] text-[#3a3a3a] grid place-items-center">${use('i-env', 'w-[10px] h-2')}</button>
                        <button aria-label="Phase" class="mt-[6px]">${use('i-phase', 'w-[11px] h-[11px] block')}</button>
                    </div>
                </div>
                <div class="h-[20px] shrink-0 flex items-center pb-[2px] ${i ? 'pl-[8px]' : 'pl-[10px]'}">
                    ${use('i-speaker', 'w-[7px] h-[10px] text-[#777]')}
                    <button aria-label="Record arm ${i + 1}" class="ml-[8px]">${use(s.rec, 'w-4 h-4 block')}</button>
                </div>
                <div class="h-[18px] shrink-0 text-center text-[11px] leading-[18px] ${s.color}">${s.name}</div>
                <div class="h-[14px] shrink-0 relative text-center text-[8px] leading-[14px] font-semibold text-white ${i === 2 ? 'bg-[#858a87]' : 'bg-[#3b7a7a]'}"><span class="absolute left-1/2 -top-[2px] w-1 h-1 -ml-[2px] rounded-full ${i === 5 ? 'bg-white' : 'bg-[#1c1c1c]'}"></span>${i + 1}</div>
            </div>`).join('');

        // Master
        document.getElementById('master-fx').innerHTML = ['PSP BussPressor', 'ML8000', 'bx_meter'].map(f => slot(f)).join('');
        const outer = [12, 6, 0, 6, 12, 18, 24, 30, 36, 42];
        document.getElementById('scale-l').innerHTML = outer.map((v, i) => `<span>${v}${i > 1 ? '-' : ''}</span>`).join('');
        document.getElementById('scale-r').innerHTML = outer.map((v, i) => `<span>${i > 1 ? '-' : ''}${v}</span>`).join('');
        document.getElementById('scale-m').innerHTML = [6, 12, 18, 24, 30, 36, 42, 48, 54].map(v => `<span>-${v}-</span>`).join('');
    </script>
</body>
</html>
